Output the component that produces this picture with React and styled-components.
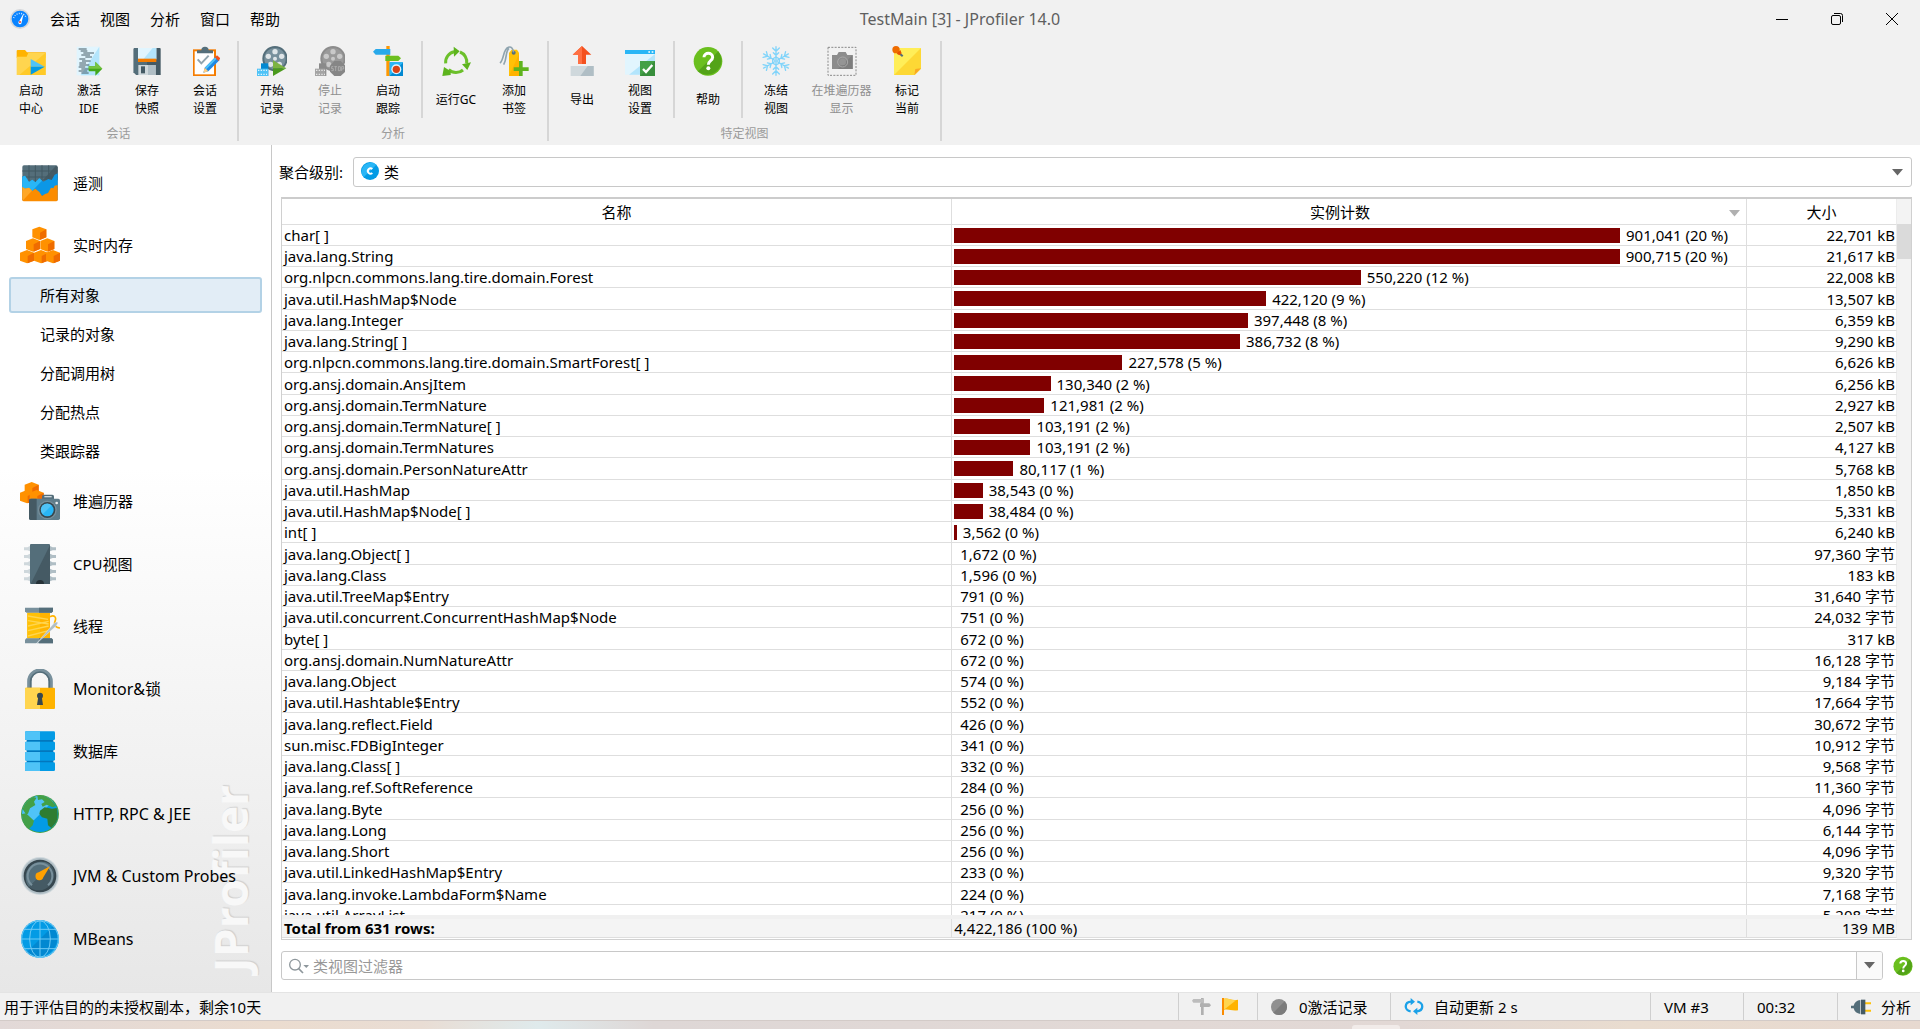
import React from "react";
import styled, { createGlobalStyle, css } from "styled-components";

const GlobalStyle = createGlobalStyle`
  *, *::before, *::after { box-sizing: border-box; }
  body {
    margin: 0;
    background: #fff;
    color: #000;
    font-family: "Noto Sans", "Open Sans", "Noto Sans CJK SC", sans-serif;
    font-size: 15px;
    line-height: 20px;
  }
  button, input, select { font: inherit; color: inherit; }
  button { border: 0; padding: 0; background: none; }
  ul { list-style: none; margin: 0; padding: 0; }
  svg { display: block; flex: none; }
`;

/* ---------- shell ---------- */

const Window = styled.div`
  display: flex;
  flex-direction: column;
  height: 100vh;
  overflow: hidden;
`;

const TitleBar = styled.header`
  display: grid;
  grid-template-columns: 1fr auto 1fr;
  align-items: center;
  height: 38px;
  flex: none;
  background: #f1f1f1;
`;

const MenuBar = styled.nav`
  display: flex;
  align-items: center;
  gap: 20px;
  padding-left: 10px;
`;

const MenuButton = styled.button`
  height: 20px;
`;

const Title = styled.h1`
  margin: 0;
  font-size: 16px;
  font-weight: 400;
  color: #5f5f5f;
`;

const WindowControls = styled.div`
  display: flex;
  justify-content: flex-end;
  padding-right: 1px;
`;

const WindowButton = styled.button`
  display: grid;
  place-items: center;
  width: 55px;
  height: 36px;
`;

/* ---------- toolbar ---------- */

const Toolbar = styled.div`
  display: flex;
  flex: none;
  height: 107px;
  padding-top: 3px;
  background: #f1f1f1;
`;

const ToolGroup = styled.section`
  display: flex;
  flex-direction: column;
  height: 100px;
  border-right: 2px solid #d6d6d6;
`;

const ToolSections = styled.div`
  display: flex;
  height: 79px;
`;

const ToolSection = styled.div`
  display: flex;
  padding: ${(p) => (p.$first ? "0 3px 0 2px" : "0 4px")};
  & + & { border-left: 2px solid #d6d6d6; }
`;

const ToolButton = styled.button`
  display: flex;
  flex-direction: column;
  align-items: center;
  gap: 6px;
  width: ${(p) => (p.$wide ? 73 : 58)}px;
  padding-top: 5px;
  font-size: 12px;
  line-height: 18px;
  color: ${(p) => (p.disabled ? "#8f8f8f" : "#000")};
`;

const ToolLabel = styled.span`
  display: flex;
  flex-direction: column;
  justify-content: center;
  height: 36px;
  white-space: nowrap;
`;

const GroupLabel = styled.span`
  padding-top: 7px;
  text-align: center;
  font-size: 12px;
  line-height: 18px;
  color: #9b9b9b;
`;

/* ---------- body ---------- */

const Body = styled.div`
  display: grid;
  grid-template-columns: 272px minmax(0, 1fr);
  flex: 1;
  min-height: 0;
`;

const Sidebar = styled.nav`
  position: relative;
  padding-top: 7px;
  border-right: 1px solid #c8c8c8;
  background: linear-gradient(#fff 0, #fff 38%, #e7e7e7 100%);
  overflow: hidden;
`;

const Watermark = styled.span`
  position: absolute;
  right: 9px;
  bottom: 20px;
  writing-mode: vertical-rl;
  transform: rotate(180deg);
  font-family: "Open Sans", sans-serif;
  font-size: 46px;
  font-weight: 700;
  line-height: 64px;
  color: #f8f8f8;
  text-shadow: 1px 1px 1px #cfcfcf;
`;

const NavList = styled.ul`
  position: relative;
`;

const NavEntry = styled.li`
  &:nth-child(n + 3):nth-child(even) > button { height: 63px; }
`;

const NavButton = styled.button`
  display: flex;
  align-items: center;
  gap: 13px;
  width: 100%;
  height: 62px;
  padding-left: 20px;
  font-size: ${(p) => (p.$latin ? 16 : 15)}px;
  text-align: left;
`;

const SubList = styled.ul`
  display: flex;
  flex-direction: column;
  gap: 3px;
  padding: 1px 9px;
`;

const SubButton = styled.button`
  display: block;
  width: 100%;
  height: 36px;
  padding-left: 29px;
  border: 2px solid transparent;
  border-radius: 3px;
  text-align: left;
  ${(p) =>
    p.$selected &&
    css`
      border-color: #b3d2e6;
      background: #e2edf6;
    `}
`;

const Content = styled.main`
  display: flex;
  flex-direction: column;
  min-width: 0;
  min-height: 0;
  padding: 12px 8px 12px 7px;
`;

const LevelRow = styled.div`
  display: flex;
  align-items: center;
  gap: 10px;
  height: 30px;
  flex: none;
`;

const SelectBox = styled.div`
  position: relative;
  flex: 1;
  height: 30px;
  > svg { position: absolute; pointer-events: none; }
  > svg:first-child { left: 8px; top: 5px; }
  > svg:last-child { right: 9px; top: 12px; }
`;

const LevelSelect = styled.select`
  appearance: none;
  display: block;
  width: 100%;
  height: 30px;
  padding: 0 30px;
  border: 1px solid #c8c8c8;
  border-radius: 3px;
  background: #fff;
`;

const TableFrame = styled.div`
  display: flex;
  flex: 1;
  min-height: 0;
  margin: 10px 0 11px 2px;
  border: 1px solid #d0d0d0;
  border-top: 2px solid #cccccc;
`;

const TableView = styled.div`
  display: flex;
  flex-direction: column;
  flex: 1;
  min-width: 0;
`;

const RowsView = styled.div`
  flex: 1;
  min-height: 0;
  overflow: hidden;
`;

const Table = styled.table`
  width: 100%;
  table-layout: fixed;
  border-collapse: separate;
  border-spacing: 0;
  th, td {
    border-right: 1px solid #dedede;
    border-bottom: 1px solid #dedede;
    white-space: nowrap;
  }
  th:last-child, td:last-child { border-right-color: #ececec; }
`;

const TotalsTable = styled(Table)`
  flex: none;
  margin-bottom: 1px;
  border-top: 4px solid #f0f0f0;
  background: #f4f4f4;
`;

const NameCol = styled.col`
  width: 41.5%;
`;

const SizeCol = styled.col`
  width: 150px;
`;

const HeadCell = styled.th`
  position: relative;
  height: 26px;
  padding: 0 ${(p) => (p.$sorted ? 18 : 0)}px 0 0;
  font-weight: 400;
  > svg { position: absolute; right: 6px; top: 11px; }
`;

const Row = styled.tr`
  height: 21px;
  &:nth-child(4n) { height: 22px; }
`;

const Cell = styled.td`
  padding: ${(p) => (p.$right ? "0 1px 0 2px" : "0 2px")};
  overflow: hidden;
  line-height: 20px;
  text-align: ${(p) => (p.$right ? "right" : "left")};
`;

const CountLine = styled.div`
  display: flex;
  align-items: center;
  gap: 6px;
  height: 20px;
`;

const Bar = styled.span`
  height: 15px;
  background: #800000;
`;

const TotalCell = styled(Cell)`
  height: 19px;
  line-height: 18px;
  font-weight: ${(p) => (p.$bold ? 700 : 400)};
`;

const ScrollTrack = styled.div`
  width: 14px;
  flex: none;
  padding-top: 25px;
  background: #f3f3f3;
`;

const ScrollThumb = styled.div`
  height: 35px;
  background: #dadada;
`;

const FilterRow = styled.div`
  display: flex;
  align-items: center;
  gap: 10px;
  flex: none;
  padding-left: 2px;
  margin-right: -1px;
`;

const FilterBox = styled.div`
  display: flex;
  align-items: center;
  flex: 1;
  height: 29px;
  border: 1px solid #c8c8c8;
  border-radius: 3px;
  padding-left: 7px;
  overflow: hidden;
`;

const FilterInput = styled.input`
  flex: 1;
  min-width: 0;
  height: 27px;
  padding: 0 4px;
  border: 0;
  outline: 0;
  background: none;
  &::placeholder { color: #989898; opacity: 1; }
`;

const FilterMenu = styled.button`
  display: grid;
  place-items: center;
  width: 26px;
  height: 27px;
  border-left: 1px solid #c8c8c8;
  background: #fafafa;
`;

/* ---------- status bar ---------- */

const StatusBar = styled.footer`
  display: flex;
  flex: none;
  height: 28px;
  border-top: 1px solid #e4e4e4;
  background: #f1f1f1;
`;

const StatusText = styled.span`
  flex: 1;
  padding-left: 4px;
  line-height: 28px;
`;

const StatusCell = styled.span`
  display: flex;
  align-items: center;
  gap: ${(p) => p.$gap || 10}px;
  width: ${(p) => p.$width}px;
  padding-left: 13px;
  border-left: 1px solid #cfcfcf;
  white-space: nowrap;
`;

const Desktop = styled.div`
  flex: none;
  display: flex;
  align-items: flex-end;
  height: 9px;
  border-top: 1px solid #d3cbc8;
  background: linear-gradient(90deg, #e2d9d8 0, #ebdccf 14%, #e9ddd4 22%, #dfeaec 28%, #ded7d6 34%, #e2d9d6 60%, #e2d8d5 73%, #e9dccf 85%, #e7d9d0 100%);
`;

const DesktopTab = styled.div`
  width: 48px;
  height: 4px;
  margin-left: 70.4%;
  border-radius: 3px 3px 0 0;
  background: #f1ebe9;
`;

/* ---------- drawings ---------- */

const Tool = ({ children }) => (
  <svg width="30" height="30" viewBox="0 0 90 90" aria-hidden="true">{children}</svg>
);
const Side = ({ children }) => (
  <svg width="40" height="40" viewBox="0 0 120 120" aria-hidden="true">{children}</svg>
);

const Arrow = ({ color = "#666" }) => (
  <svg width="11" height="7" viewBox="0 0 11 7" aria-hidden="true"><path d="M0 0h11L5.500 6.500z" fill={color} /></svg>
);

const LogoIcon = () => (
  <svg width="20" height="20" viewBox="0 0 60 60" aria-hidden="true">
    <circle cx="30" cy="30" r="30" fill="#d3d6da" />
    <circle cx="30" cy="30" r="25" fill="#0a84ff" />
    <path d="M11 27a20 20 0 0 1 38 0" fill="none" stroke="#cfe6ff" strokeWidth="4" strokeDasharray="3 4" />
    <path d="M41 13L35 40a5 5 0 1 1-7-4z" fill="#fff" />
    <circle cx="30" cy="39" r="3" fill="#e53935" />
  </svg>
);

const FolderIcon = () => (
  <Tool>
    <path d="M2 15a3 3 0 0 1 3-3h22l6 7h56v16H2z" fill="#ffb300" />
    <path d="M2 32h30l5-12h52v67H2z" fill="#ffd54f" />
    <path d="M89 20v67H10z" fill="#ffca28" />
    <path d="M44 39l42 23H44z" fill="#4fc3f7" />
    <path d="M44 86l42-24H44z" fill="#039be5" />
  </Tool>
);
const IdeIcon = () => (
  <Tool>
    <path d="M8 2h68v86H8z" fill="#e1f5fe" />
    <path d="M76 2v86H20z" fill="#b3e5fc" />
    <g stroke="#455a64" strokeWidth="3">
      <path d="M14 9h24M20 15h20M28 21h32M22 27h26M34 33h20M16 39h18M24 45h26M16 51h20M16 57h30M14 63h20M22 69h24M14 75h26M22 81h22" />
    </g>
    <path d="M44 61h20V47l21 21-21 21V76H44z" fill="#43a81b" />
    <path d="M44 61h20V47l21 21H44z" fill="#76c442" />
  </Tool>
);
const SaveIcon = () => (
  <Tool>
    <path d="M5 9a3 3 0 0 1 3-3h75a3 3 0 0 1 3 3v78H13l-8-8z" fill="#455a64" />
    <path d="M5 9a3 3 0 0 1 3-3h37v81H13l-8-8z" fill="#546e7a" />
    <path d="M18 6h55v34H18z" fill="#e1f5fe" />
    <path d="M73 6v34H34L62 6z" fill="#b3e5fc" />
    <path d="M18 38h55v10H18z" fill="#f57c00" />
    <path d="M19 57h52v30H19z" fill="#cfd8dc" />
    <path d="M48 57h23v30H48z" fill="#b0bec5" />
    <path d="M27 61h12v21H27z" fill="#455a64" />
  </Tool>
);
const SessionIcon = () => (
  <Tool>
    <path d="M9 10h69v80H9z" fill="#f57c00" />
    <path d="M14 16h58v69H14z" fill="#fff" />
    <path d="M21 22v-9h13a11 11 0 0 1 22 0h13v9z" fill="#546e7a" />
    <path d="M23 40l11 12 22-23" fill="none" stroke="#90a4ae" strokeWidth="6" />
    <path d="M40 80l4-15 34-34 11 11-34 34z" fill="#1e88e5" />
    <path d="M45 65l31-31 4 4-31 32z" fill="#4fc3f7" />
    <path d="M40 80l4-15 11 11z" fill="#ffcc80" />
    <path d="M75 34l6-6 10 9-6 8z" fill="#f4511e" />
  </Tool>
);
const Reel = ({ dark, light, hole }) => (
  <>
    <circle cx="54" cy="38" r="38" fill={dark} />
    <circle cx="54" cy="38" r="32" fill={light} />
    <g fill={hole}>
      <circle cx="54" cy="17" r="8" /><circle cx="74" cy="31" r="8" /><circle cx="67" cy="55" r="8" />
      <circle cx="41" cy="55" r="8" /><circle cx="34" cy="31" r="8" />
    </g>
    <circle cx="54" cy="38" r="6" fill={hole} />
  </>
);
const RecordIcon = () => (
  <Tool>
    <Reel dark="#546e7a" light="#78909c" hole="#dfe5e8" />
    <path d="M12 52h22v38H12z" fill="#0288d1" />
    <path d="M0 68h33v22H0z" fill="#4fc3f7" />
    <path d="M3 73h27M3 85h27" stroke="#e1f5fe" strokeWidth="4" strokeDasharray="4 4" />
    <path d="M48 43l40 24H48z" fill="#7cb342" />
    <path d="M48 90l40-23H48z" fill="#4a9a1c" />
  </Tool>
);
const StopIcon = () => (
  <Tool>
    <Reel dark="#8c8c8c" light="#9a9a9a" hole="#c9c9c9" />
    <path d="M12 52h22v38H12z" fill="#8a8a8a" />
    <path d="M0 68h31v22H0z" fill="#a4a4a4" />
    <path d="M3 73h27M3 85h27" stroke="#e6e6e6" strokeWidth="4" strokeDasharray="4 4" />
    <path d="M58 45h19l14 14v18L77 90H58L45 77V59z" fill="#868686" />
    <path d="M55 62h-5v6h5v6h-6M58 62h8M62 62v13M70 62h6v12h-6zM80 75V62h6v7h-6" fill="none" stroke="#bdbdbd" strokeWidth="2" />
  </Tool>
);
const TraceIcon = () => (
  <Tool>
    <path d="M40 0h10v90H40z" fill="#ff9800" />
    <path d="M0 17l8-8h44v17H8z" fill="#29a9ea" />
    <path d="M84 37l-8-8H37v16h39z" fill="#6cbf1f" />
    <path d="M50 49h41v41H50z" fill="#0288d1" />
    <path d="M50 49h41L50 90z" fill="#29b6f6" />
    <circle cx="70" cy="70" r="15" fill="#e1f5fe" />
    <circle cx="70" cy="70" r="11" fill="#d84315" />
  </Tool>
);
const GcIcon = () => (
  <Tool>
    <g fill="none" stroke="#6cc02b" strokeWidth="9">
      <path d="M14 52A32 32 0 0 1 40 17" />
      <path d="M57 18A32 32 0 0 1 77 52" />
      <path d="M66 72A32 32 0 0 1 23 71" />
    </g>
    <g fill="#5db41d">
      <path d="M38 2l18 14-17 16z" />
      <path d="M63 55l27-6-11 23z" />
      <path d="M29 87l-25 3 5-27 20 13z" />
    </g>
  </Tool>
);
const BookmarkIcon = () => (
  <Tool>
    <path d="M30 20l8-9h16l6 9v70H30z" fill="#ffc107" />
    <path d="M60 24v66H30z" fill="#ffb300" />
    <circle cx="44" cy="20" r="6" fill="#546e7a" />
    <path d="M3 51C16 40 11 11 28 4c9-4 14 4 16 15M14 56C25 38 18 17 30 7" fill="none" stroke="#8fa4af" strokeWidth="5" />
    <path d="M60 45h11v19h18v11H71v15H60V75H44V64h16z" fill="#5fb41f" />
  </Tool>
);
const ExportIcon = () => (
  <Tool>
    <path d="M45 0l28 26H57v28H33V26H17z" fill="#f4511e" />
    <path d="M45 0v54H33V26H17z" fill="#ff7043" />
    <path d="M11 60h69v30H11z" fill="#cfd8dc" />
    <path d="M80 60v30H40l22-30z" fill="#b0bec5" />
  </Tool>
);
const ViewSettingsIcon = () => (
  <Tool>
    <path d="M0 12h90v12H0z" fill="#29b6f6" />
    <path d="M70 16h5v4h-5zM80 16h5v4h-5z" fill="#fff" />
    <path d="M0 24h90v62H0z" fill="#e1f5fe" />
    <path d="M90 24v62H12z" fill="#b3e5fc" />
    <path d="M45 45h45v45H45z" fill="#388e3c" />
    <path d="M45 45h45L45 90z" fill="#43a047" />
    <path d="M54 69l9 9 19-21" fill="none" stroke="#fff" strokeWidth="7" />
  </Tool>
);
const HelpIcon = ({ size = 30 }) => (
  <svg width={size} height={size} viewBox="0 0 90 90" aria-hidden="true">
    <circle cx="45" cy="46" r="43" fill="#6abf1e" />
    <path d="M76 16A43 43 0 0 1 15 76z" fill="#53a318" />
    <path d="M33 34c0-16 26-16 26 0 0 10-13 10-13 22" fill="none" stroke="#fff" strokeWidth="9" />
    <circle cx="46" cy="67" r="6" fill="#fff" />
  </svg>
);
const FreezeIcon = () => (
  <Tool>
    <g fill="none" stroke="#81d4fa" strokeWidth="4" strokeLinecap="round">
      {[0, 60, 120, 180, 240, 300].map((a) => (
        <g key={a} transform={`rotate(${a} 45 45)`}>
          <path d="M45 42V2M35 6l10 10L55 6M37 20l8 8 8-8" />
        </g>
      ))}
      <path d="M45 33l10 6v12l-10 6-10-6V39z" />
    </g>
  </Tool>
);
const HeapShotIcon = () => (
  <Tool>
    <rect x="3" y="4" width="84" height="84" fill="none" stroke="#8a8a8a" strokeWidth="3" strokeDasharray="6 4" />
    <path d="M15 27h15l5-9h21l5 9h16v42H15z" fill="#8c8c8c" />
    <path d="M77 27v42H32z" fill="#7e7e7e" />
    <circle cx="47" cy="48" r="15" fill="none" stroke="#a8a8a8" strokeWidth="3" />
    <circle cx="47" cy="48" r="10" fill="#959595" />
  </Tool>
);
const NoteIcon = () => (
  <Tool>
    <path d="M6 6h81v62L68 87H6z" fill="#ffee58" />
    <path d="M87 6v62L68 87H6z" fill="#fdd835" />
    <path d="M87 67L67 87l3-18z" fill="#f9a825" />
    <path d="M14 14l18 17" stroke="#546e7a" strokeWidth="6" />
    <circle cx="12" cy="11" r="11" fill="#ef6c00" />
    <path d="M14 23l11-11 4 10-7 6z" fill="#e65100" />
  </Tool>
);

const Cube = ({ x, y }) => (
  <g transform={`translate(${x} ${y})`}>
    <path d="M0-20l21 8v24L0 20l-21-8v-24z" fill="#ff9100" />
    <path d="M2-2l19-10v24L2 20z" fill="#ef6c00" />
  </g>
);
const TelemetryIcon = () => (
  <Side>
    <rect x="7" y="7" width="106" height="107" rx="5" fill="#546e7a" />
    <path d="M113 12v40H68L108 8z" fill="#455a64" />
    <path d="M7 24h106M7 42h106M27 7v50M46 7v50M66 7v50M86 7v50" stroke="#415862" strokeWidth="3" />
    <path d="M7 41l8-3 12 19 10-7 9 8 12-12 12 10 15-8 10 3 9-16 9-4v50L65 98 7 85z" fill="#0c97e6" />
    <path d="M7 41l8-3 12 19 10-7 9 8 12-12 8 7-29 30L7 78z" fill="#29b6f6" />
    <path d="M7 72l8 5 12-3 10 10 9-7 12 10 8 12 9-6 9-3 9-16 7 2 4-8 9-2v44a5 5 0 0 1-5 5H12a5 5 0 0 1-5-5z" fill="#fb8c00" />
    <path d="M7 72l8 5 12-3 9 9L9 112l-2-3z" fill="#ffa726" />
  </Side>
);
const CubesIcon = () => (
  <Side>
    <Cube x={58} y={25} /><Cube x={39} y={60} /><Cube x={82} y={60} />
    <Cube x={21} y={95} /><Cube x={63} y={95} /><Cube x={99} y={95} />
  </Side>
);
const HeapIcon = () => (
  <Side>
    <Cube x={35} y={23} /><Cube x={21} y={47} /><Cube x={50} y={47} />
    <path d="M66 54v-8a5 5 0 0 1 5-5h26a5 5 0 0 1 5 5v8z" fill="#546e7a" />
    <path d="M73 47h22" stroke="#cfd8dc" strokeWidth="4" />
    <rect x="27" y="53" width="93" height="64" rx="5" fill="#607d8b" />
    <path d="M27 58a5 5 0 0 1 5-5h18v64H32a5 5 0 0 1-5-5z" fill="#455a64" />
    <circle cx="82" cy="87" r="28" fill="#78909c" />
    <circle cx="82" cy="87" r="24" fill="#37474f" />
    <circle cx="82" cy="87" r="19" fill="#29b6f6" />
    <path d="M68 100a19 19 0 0 1 27-27z" fill="#4fc3f7" />
    <circle cx="110" cy="66" r="4" fill="#eceff1" />
  </Side>
);
const CpuIcon = () => (
  <Side>
    {[14, 37, 59, 82, 104].map((y) => (
      <g key={y} fill="#b0bec5">
        <path d={`M30 ${y - 8}v16l-8-3H12v-9h10z`} fill="#cfd8dc" />
        <path d={`M90 ${y - 8}v16l8-3h10v-9H98z`} />
      </g>
    ))}
    <rect x="30" y="0" width="60" height="120" rx="3" fill="#546e7a" />
    <path d="M90 3v117H32z" fill="#455a64" />
    <path d="M48 120a12 12 0 0 1 24 0z" fill="#263238" />
  </Side>
);
const ThreadIcon = () => (
  <Side>
    <path d="M22 20h68v77H22z" fill="#ffb300" />
    <path d="M22 20h38v77H22z" fill="#ffc107" />
    <path d="M24 30l60 10M24 44l62 10M24 60l62-14M24 74l62-14M24 90l62-16" stroke="#ffd54f" strokeWidth="4" />
    <path d="M15 5h84v11l-4 4H19l-4-4z" fill="#78909c" />
    <path d="M15 112h84v-11l-4-4H19l-4 4z" fill="#78909c" />
    <path d="M57 5h42v11l-4 4H57zM57 97h38l4 4v11H57z" fill="#546e7a" />
    <path d="M90 32c14-6 20 2 15 14-3 8-2 18 15 20" fill="none" stroke="#ffb300" strokeWidth="5" />
    <path d="M48 114l50-58c6-6 13-10 15-7s-3 9-8 14z" fill="#b0bec5" stroke="#fff" strokeWidth="1" />
  </Side>
);
const LockIcon = () => (
  <Side>
    <path d="M28 58V37a32 32 0 0 1 64 0v21" fill="none" stroke="#78909c" strokeWidth="13" />
    <path d="M32 58V37a28 28 0 0 1 56 0v21" fill="none" stroke="#546e7a" strokeWidth="5" />
    <rect x="15" y="56" width="90" height="64" rx="3" fill="#ffb300" />
    <path d="M60 56v64H18a3 3 0 0 1-3-3V59a3 3 0 0 1 3-3z" fill="#ffd54f" />
    <circle cx="60" cy="80" r="9" fill="#37474f" />
    <path d="M55 82h10l4 26H51z" fill="#37474f" />
  </Side>
);
const DatabaseIcon = () => (
  <Side>
    <path d="M20 6h80v108H20z" fill="#0277bd" />
    {[1, 32, 63, 94].map((y) => (
      <g key={y}>
        <rect x="15" y={y} width="90" height="26" rx="4" fill="#039be5" />
        <path d={`M60 ${y}v26H19a4 4 0 0 1-4-4v-18a4 4 0 0 1 4-4z`} fill="#4fc3f7" />
      </g>
    ))}
  </Side>
);
const EarthIcon = () => (
  <Side>
    <circle cx="60" cy="60" r="57" fill="#43a047" />
    <circle cx="60" cy="60" r="54" fill="#039be5" />
    <path d="M99 22A54 54 0 0 0 22 98z" fill="#4fc3f7" />
    <path d="M8 46c4-16 16-30 32-37l10 2-8 12 4 10-16 10-6 16-6 2z" fill="#43a047" />
    <path d="M6 60l12-2 24 22-4 14-12 12C12 94 6 78 6 60z" fill="#43a047" />
    <path d="M52 6c20-3 34 4 44 14l12 16-10 4-18-8-12 6-4-8 10-6-8-8-12 2z" fill="#43a047" />
    <path d="M60 50l14-10 22 4 14-2c6 22 2 38-4 46l-12 14-10-8-2-20-16-4-8-10z" fill="#2e7d32" />
  </Side>
);
const GaugeIcon = () => (
  <Side>
    <circle cx="60" cy="60" r="57" fill="#cfd8dc" />
    <circle cx="60" cy="60" r="54" fill="#b0bec5" />
    <circle cx="60" cy="60" r="49" fill="#37474f" />
    <path d="M93 27A47 47 0 0 1 27 93z" fill="#455a64" />
    <path d="M93 27A47 47 0 0 0 27 93z" fill="#546e7a" />
    <path d="M36 88a37 37 0 1 1 48 0" fill="none" stroke="#78909c" strokeWidth="6" />
    <path d="M90 31L70 64a12 12 0 1 1-14-15z" fill="#ffa000" />
  </Side>
);
const BeansIcon = () => (
  <Side>
    <circle cx="60" cy="60" r="57" fill="#039be5" />
    <path d="M100 20A57 57 0 0 1 20 100z" fill="#0288d1" />
    <g fill="none" stroke="#6fcaf5" strokeWidth="3">
      <circle cx="60" cy="60" r="55" />
      <ellipse cx="60" cy="60" rx="31" ry="55" />
      <path d="M60 4v112M4 60h112M14 31h92M14 89h92" />
    </g>
  </Side>
);

const ClassIcon = () => (
  <svg width="18" height="18" viewBox="0 0 54 54" aria-hidden="true">
    <circle cx="27" cy="27" r="27" fill="#039be5" />
    <path d="M46 8A27 27 0 0 0 8 46z" fill="#29b6f6" />
    <path d="M34 21a8 8 0 1 0 0 12" fill="none" stroke="#fff" strokeWidth="6" />
  </svg>
);
const SearchIcon = () => (
  <svg width="20" height="16" viewBox="0 0 60 48" aria-hidden="true">
    <circle cx="18" cy="20" r="16" fill="none" stroke="#8e979c" strokeWidth="4" />
    <path d="M29 32l13 13" stroke="#8e979c" strokeWidth="5" />
    <path d="M43 21h17l-8 9z" fill="#8e979c" />
  </svg>
);
const PostIcon = () => (
  <svg width="19" height="17" viewBox="0 0 57 51" aria-hidden="true">
    <path d="M27 0h8v51h-8z" fill="#b0b0b0" />
    <path d="M0 8l4-5h32v11H4z" fill="#bdbdbd" />
    <path d="M57 22l-5-6H24v11h28z" fill="#b0b0b0" />
  </svg>
);
const FlagIcon = () => (
  <svg width="16" height="17" viewBox="0 0 48 51" aria-hidden="true">
    <path d="M5 3c14-5 20 6 43 2v32C28 40 20 32 5 36z" fill="#ffb300" />
    <path d="M5 3c14-5 20 6 38 3L5 36z" fill="#ffd54f" />
    <path d="M0 0h6v51H0z" fill="#fb8c00" />
  </svg>
);
const DotIcon = () => (
  <svg width="16" height="16" viewBox="0 0 48 48" aria-hidden="true">
    <circle cx="24" cy="24" r="24" fill="#909090" />
    <path d="M41 7A24 24 0 0 1 7 41z" fill="#7c7c7c" />
  </svg>
);
const RefreshIcon = () => (
  <svg width="20" height="17" viewBox="0 0 60 51" aria-hidden="true">
    <g fill="none" stroke="#1ba1e8" strokeWidth="7">
      <path d="M20 40C0 38 0 12 22 11" /><path d="M40 11c20 2 20 28-2 29" />
    </g>
    <path d="M20 0l13 11-13 11zM40 29L27 40l13 11z" fill="#1ba1e8" />
  </svg>
);
const PlugIcon = () => (
  <svg width="20" height="16" viewBox="0 0 60 48" aria-hidden="true">
    <path d="M40 10h20v6H40zM40 32h20v6H40z" fill="#ffc107" />
    <path d="M0 20h8C10 10 18 4 28 3v42C18 44 10 38 8 28H0z" fill="#546e7a" />
    <path d="M30 2h13v44H30z" fill="#455a64" />
  </svg>
);

/* ---------- data ---------- */

const menus = ["会话", "视图", "分析", "窗口", "帮助"];

const toolGroups = [
  {
    label: "会话",
    sections: [[
      { icon: FolderIcon, lines: ["启动", "中心"] },
      { icon: IdeIcon, lines: ["激活", "IDE"] },
      { icon: SaveIcon, lines: ["保存", "快照"] },
      { icon: SessionIcon, lines: ["会话", "设置"] },
    ]],
  },
  {
    label: "分析",
    sections: [
      [
        { icon: RecordIcon, lines: ["开始", "记录"] },
        { icon: StopIcon, lines: ["停止", "记录"], disabled: true },
        { icon: TraceIcon, lines: ["启动", "跟踪"] },
      ],
      [
        { icon: GcIcon, lines: ["运行GC"] },
        { icon: BookmarkIcon, lines: ["添加", "书签"] },
      ],
    ],
  },
  {
    label: "特定视图",
    sections: [
      [
        { icon: ExportIcon, lines: ["导出"] },
        { icon: ViewSettingsIcon, lines: ["视图", "设置"] },
      ],
      [{ icon: HelpIcon, lines: ["帮助"] }],
      [
        { icon: FreezeIcon, lines: ["冻结", "视图"] },
        { icon: HeapShotIcon, lines: ["在堆遍历器", "显示"], disabled: true, wide: true },
        { icon: NoteIcon, lines: ["标记", "当前"] },
      ],
    ],
  },
];

const navigation = [
  { label: "遥测", icon: TelemetryIcon },
  {
    label: "实时内存",
    icon: CubesIcon,
    children: ["所有对象", "记录的对象", "分配调用树", "分配热点", "类跟踪器"],
  },
  { label: "堆遍历器", icon: HeapIcon },
  { label: "CPU视图", icon: CpuIcon },
  { label: "线程", icon: ThreadIcon },
  { label: "Monitor&锁", icon: LockIcon, latin: true },
  { label: "数据库", icon: DatabaseIcon },
  { label: "HTTP, RPC & JEE", icon: EarthIcon, latin: true },
  { label: "JVM & Custom Probes", icon: GaugeIcon, latin: true },
  { label: "MBeans", icon: BeansIcon, latin: true },
];

const classes = [
  ["char[ ]", 901041, 20, "22,701 kB"],
  ["java.lang.String", 900715, 20, "21,617 kB"],
  ["org.nlpcn.commons.lang.tire.domain.Forest", 550220, 12, "22,008 kB"],
  ["java.util.HashMap$Node", 422120, 9, "13,507 kB"],
  ["java.lang.Integer", 397448, 8, "6,359 kB"],
  ["java.lang.String[ ]", 386732, 8, "9,290 kB"],
  ["org.nlpcn.commons.lang.tire.domain.SmartForest[ ]", 227578, 5, "6,626 kB"],
  ["org.ansj.domain.AnsjItem", 130340, 2, "6,256 kB"],
  ["org.ansj.domain.TermNature", 121981, 2, "2,927 kB"],
  ["org.ansj.domain.TermNature[ ]", 103191, 2, "2,507 kB"],
  ["org.ansj.domain.TermNatures", 103191, 2, "4,127 kB"],
  ["org.ansj.domain.PersonNatureAttr", 80117, 1, "5,768 kB"],
  ["java.util.HashMap", 38543, 0, "1,850 kB"],
  ["java.util.HashMap$Node[ ]", 38484, 0, "5,331 kB"],
  ["int[ ]", 3562, 0, "6,240 kB"],
  ["java.lang.Object[ ]", 1672, 0, "97,360 字节"],
  ["java.lang.Class", 1596, 0, "183 kB"],
  ["java.util.TreeMap$Entry", 791, 0, "31,640 字节"],
  ["java.util.concurrent.ConcurrentHashMap$Node", 751, 0, "24,032 字节"],
  ["byte[ ]", 672, 0, "317 kB"],
  ["org.ansj.domain.NumNatureAttr", 672, 0, "16,128 字节"],
  ["java.lang.Object", 574, 0, "9,184 字节"],
  ["java.util.Hashtable$Entry", 552, 0, "17,664 字节"],
  ["java.lang.reflect.Field", 426, 0, "30,672 字节"],
  ["sun.misc.FDBigInteger", 341, 0, "10,912 字节"],
  ["java.lang.Class[ ]", 332, 0, "9,568 字节"],
  ["java.lang.ref.SoftReference", 284, 0, "11,360 字节"],
  ["java.lang.Byte", 256, 0, "4,096 字节"],
  ["java.lang.Long", 256, 0, "6,144 字节"],
  ["java.lang.Short", 256, 0, "4,096 字节"],
  ["java.util.LinkedHashMap$Entry", 233, 0, "9,320 字节"],
  ["java.lang.invoke.LambdaForm$Name", 224, 0, "7,168 字节"],
  ["java.util.ArrayList", 217, 0, "5,208 字节"],
];

const largest = classes[0][1];
const barWidth = (count) => (count < 3000 ? 0 : `${(count / largest) * 84.3}%`);

const Columns = () => (
  <colgroup><NameCol /><col /><SizeCol /></colgroup>
);

/* ---------- application ---------- */

export default function App() {
  return (
    <Window>
      <GlobalStyle />
      <TitleBar>
        <MenuBar>
          <LogoIcon />
          {menus.map((m) => <MenuButton key={m}>{m}</MenuButton>)}
        </MenuBar>
        <Title>TestMain [3] - JProfiler 14.0</Title>
        <WindowControls>
          <WindowButton aria-label="最小化">
            <svg width="12" height="12" viewBox="0 0 12 12"><path d="M0 6.500h12" stroke="#000" /></svg>
          </WindowButton>
          <WindowButton aria-label="还原">
            <svg width="12" height="12" viewBox="0 0 12 12" fill="none" stroke="#000">
              <rect x=".5" y="2.500" width="9" height="9" rx="1.500" />
              <path d="M3 .5h6.500a2 2 0 0 1 2 2V9" />
            </svg>
          </WindowButton>
          <WindowButton aria-label="关闭">
            <svg width="12" height="12" viewBox="0 0 12 12"><path d="M0 0l12 12M12 0L0 12" stroke="#000" /></svg>
          </WindowButton>
        </WindowControls>
      </TitleBar>

      <Toolbar>
        {toolGroups.map((group, g) => (
          <ToolGroup key={group.label}>
            <ToolSections>
              {group.sections.map((tools, s) => (
                <ToolSection key={s} $first={g === 0}>
                  {tools.map(({ icon: Icon, lines, disabled, wide }) => (
                    <ToolButton key={lines.join("")} disabled={disabled} $wide={wide}>
                      <Icon />
                      <ToolLabel>{lines.map((l) => <span key={l}>{l}</span>)}</ToolLabel>
                    </ToolButton>
                  ))}
                </ToolSection>
              ))}
            </ToolSections>
            <GroupLabel>{group.label}</GroupLabel>
          </ToolGroup>
        ))}
      </Toolbar>

      <Body>
        <Sidebar>
          <Watermark aria-hidden="true">JProfiler</Watermark>
          <NavList>
            {navigation.map(({ label, icon: Icon, children, latin }) => (
              <NavEntry key={label}>
                <NavButton $latin={latin}><Icon />{label}</NavButton>
                {children && (
                  <SubList>
                    {children.map((c, i) => (
                      <li key={c}><SubButton $selected={i === 0}>{c}</SubButton></li>
                    ))}
                  </SubList>
                )}
              </NavEntry>
            ))}
          </NavList>
        </Sidebar>

        <Content>
          <LevelRow>
            <label htmlFor="level">聚合级别:</label>
            <SelectBox>
              <ClassIcon />
              <LevelSelect id="level" defaultValue="类">
                <option>类</option>
              </LevelSelect>
              <Arrow />
            </SelectBox>
          </LevelRow>

          <TableFrame>
            <TableView>
              <RowsView>
                <Table>
                  <Columns />
                  <thead>
                    <tr>
                      <HeadCell scope="col">名称</HeadCell>
                      <HeadCell scope="col" $sorted>实例计数<Arrow color="#b0b0b0" /></HeadCell>
                      <HeadCell scope="col">大小</HeadCell>
                    </tr>
                  </thead>
                  <tbody>
                    {classes.map(([name, count, percent, size]) => (
                      <Row key={name}>
                        <Cell>{name}</Cell>
                        <Cell>
                          <CountLine>
                            <Bar style={{ width: barWidth(count) }} />
                            {`${count.toLocaleString("en-US")} (${percent} %)`}
                          </CountLine>
                        </Cell>
                        <Cell $right>{size}</Cell>
                      </Row>
                    ))}
                  </tbody>
                </Table>
              </RowsView>
              <TotalsTable>
                <Columns />
                <tbody>
                  <tr>
                    <TotalCell $bold>Total from 631 rows:</TotalCell>
                    <TotalCell>4,422,186 (100 %)</TotalCell>
                    <TotalCell $right>139 MB</TotalCell>
                  </tr>
                </tbody>
              </TotalsTable>
            </TableView>
            <ScrollTrack><ScrollThumb /></ScrollTrack>
          </TableFrame>

          <FilterRow>
            <FilterBox>
              <SearchIcon />
              <FilterInput aria-label="类视图过滤器" placeholder="类视图过滤器" />
              <FilterMenu aria-label="过滤器历史"><Arrow /></FilterMenu>
            </FilterBox>
            <button aria-label="帮助"><HelpIcon size={20} /></button>
          </FilterRow>
        </Content>
      </Body>

      <StatusBar>
        <StatusText>用于评估目的的未授权副本，剩余10天</StatusText>
        <StatusCell $width={79} $gap={11}><PostIcon /><FlagIcon /></StatusCell>
        <StatusCell $width={133} $gap={12}><DotIcon />0激活记录</StatusCell>
        <StatusCell $width={260}><RefreshIcon />自动更新 2 s</StatusCell>
        <StatusCell $width={93}>VM #3</StatusCell>
        <StatusCell $width={94}>00:32</StatusCell>
        <StatusCell $width={83}><PlugIcon />分析</StatusCell>
      </StatusBar>
      <Desktop><DesktopTab /></Desktop>
    </Window>
  );
}
